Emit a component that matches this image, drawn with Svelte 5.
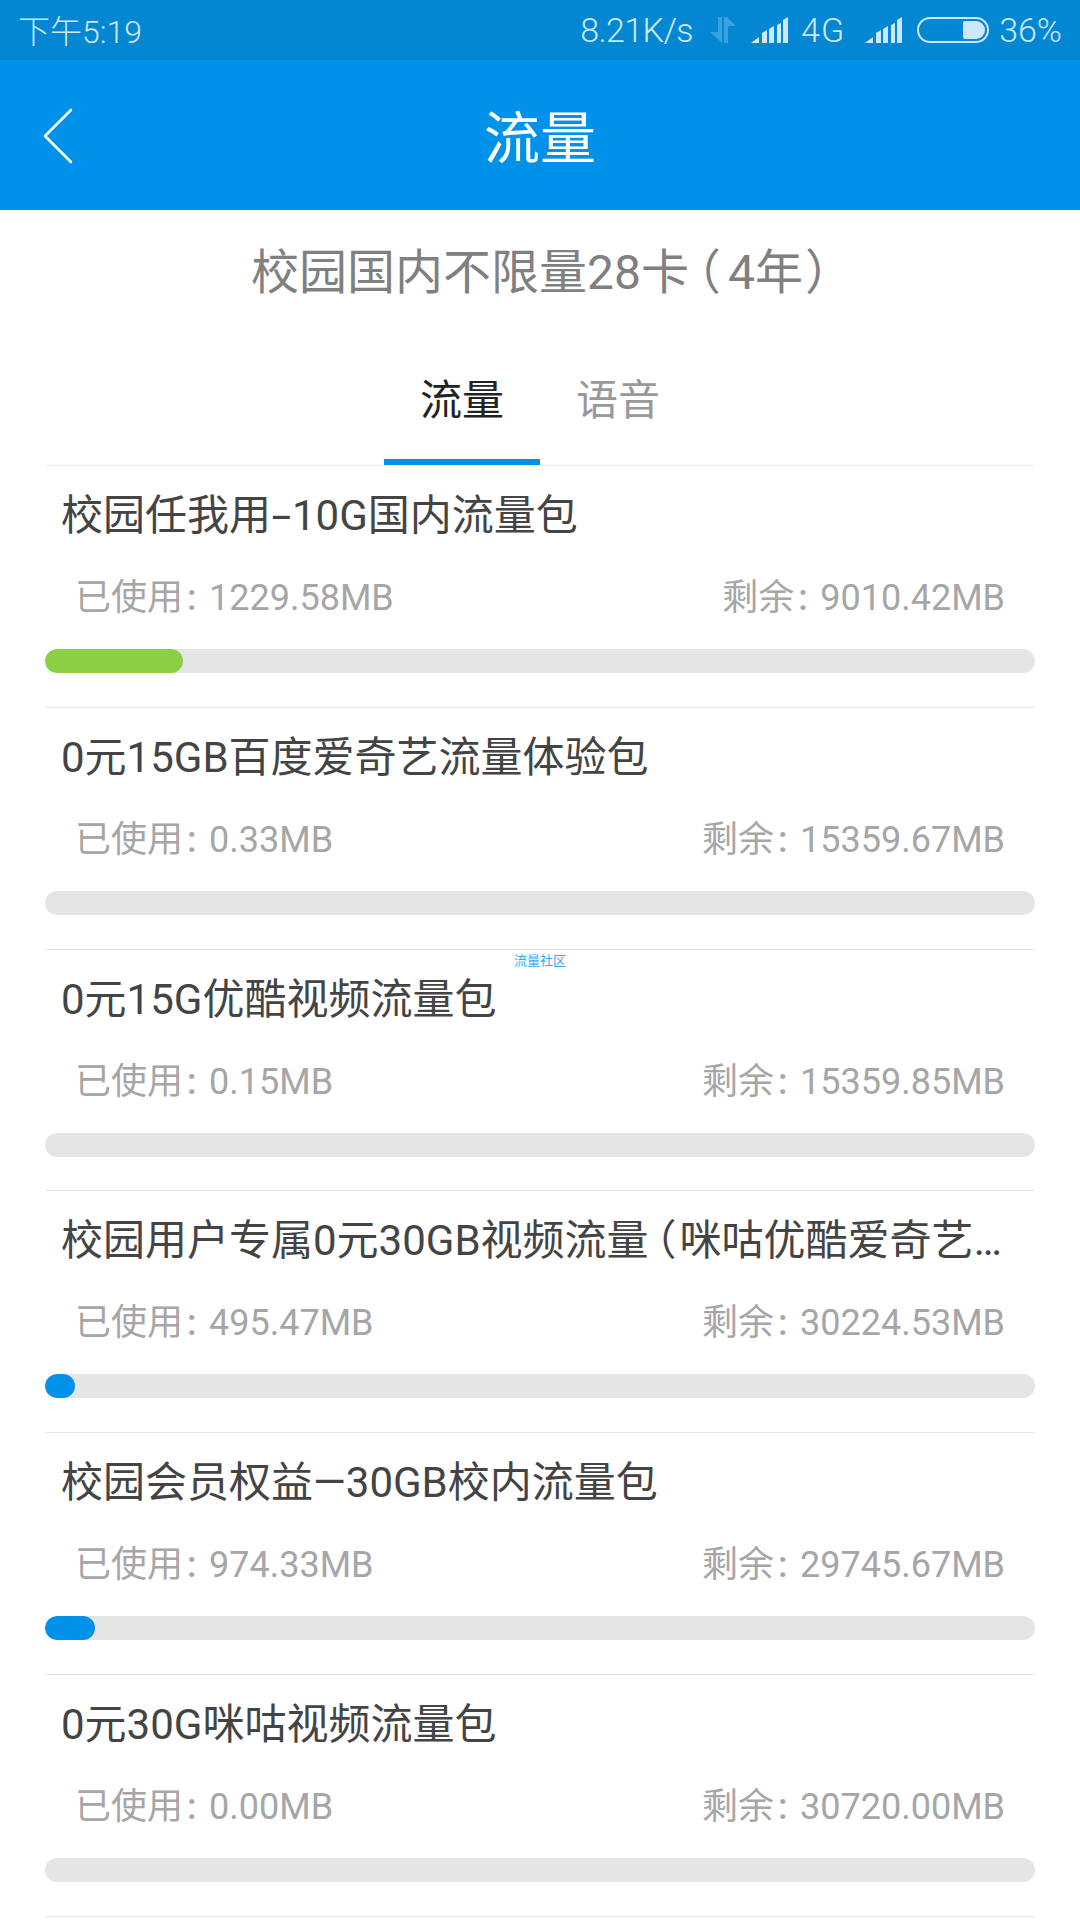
<script lang="ts">
  const packs = [
    { name: "校园任我用-10G国内流量包", used: "1229.58MB", left: "9010.42MB", pct: 13.9, color: "#8bcf45" },
    { name: "0元15GB百度爱奇艺流量体验包", used: "0.33MB", left: "15359.67MB", pct: 0, color: "#0091ea" },
    { name: "0元15G优酷视频流量包", used: "0.15MB", left: "15359.85MB", pct: 0, color: "#0091ea" },
    { name: "校园用户专属0元30GB视频流量（咪咕优酷爱奇艺腾讯）", used: "495.47MB", left: "30224.53MB", pct: 3, color: "#0091ea" },
    { name: "校园会员权益—30GB校内流量包", used: "974.33MB", left: "29745.67MB", pct: 5, color: "#0091ea" },
    { name: "0元30G咪咕视频流量包", used: "0.00MB", left: "30720.00MB", pct: 0, color: "#0091ea" },
  ];

  // the brackets and the hyphen are set tighter/wider than the font's own
  const pieces = (name: string) => name.split(/(（|）|-)/).filter(Boolean);
</script>

<div class="page">
  <div class="status">
    <span class="time">下午5:19</span>
    <div class="status-right">
      <span class="speed">8.21K/s</span>
      <svg class="updown" width="26" height="26" viewBox="0 0 26 26">
        <path d="M8 0h4v26L0 15h8z" fill="#fff" opacity="0.22" />
        <path d="M14 0h3l9 9h-8v17h-4z" fill="#fff" opacity="0.22" />
      </svg>
      <svg class="signal" width="37" height="26" viewBox="0 0 37 26">
        <path d="M0 26l8-6v6zM11 26V16l5-3v13zM18 26V12l5-3v17zM26 26V8l4-2v20zM32 26V3l5-3v26z" fill="#cde8f8" />
      </svg>
      <span class="net">4G</span>
      <svg class="signal gap" width="37" height="26" viewBox="0 0 37 26">
        <path d="M0 26l8-6v6zM11 26V16l5-3v13zM18 26V12l5-3v17zM26 26V8l4-2v20zM32 26V3l5-3v26z" fill="#cde8f8" />
      </svg>
      <div class="battery"><div class="level"></div></div>
      <span>36%</span>
    </div>
  </div>

  <header class="bar">
    <svg class="back" width="30" height="56" viewBox="0 0 30 56">
      <path d="M28 2L2 28l26 26" fill="none" stroke="#fff" stroke-width="2.6" stroke-linecap="round" stroke-linejoin="round" />
    </svg>
    <h1>流量</h1>
  </header>

  <h2 class="plan">校园国内不限量28卡<span class="open">（</span>4年<span class="close">）</span></h2>

  <div class="tabs">
    <div class="tab active">流量</div>
    <div class="tab">语音</div>
  </div>

  <div class="list">
    {#each packs as pack, i}
      <div class="row">
        {#if i === 2}<span class="mark">流量社区</span>{/if}
        <div class="name">
          {#each pieces(pack.name) as piece}
            {#if piece === "（"}<span class="open">{piece}</span>{:else if piece === "）"}<span class="close">{piece}</span>{:else if piece === "-"}<span class="dash">{piece}</span>{:else}{piece}{/if}
          {/each}
        </div>
        <div class="meta">
          <span>已使用<span class="colon">:</span>{pack.used}</span>
          <span>剩余<span class="colon">:</span>{pack.left}</span>
        </div>
        <div class="track">
          {#if pack.pct > 0}
            <div class="fill" style={`width:${pack.pct}%;background:${pack.color}`}></div>
          {/if}
        </div>
      </div>
    {/each}
  </div>
</div>

<style>
  :global(body) { margin: 0; background: #fff; }
  .page { width: 1080px; height: 1920px; overflow: hidden; background: #fff; font-family: Roboto, "Noto Sans CJK SC", sans-serif; }
  .status { height: 60px; display: flex; align-items: center; justify-content: space-between; padding: 0 18px; background: #0387d3; color: #cde8f8; font-size: 34px; font-weight: 300; box-sizing: border-box; }
  .time { font-size: 32px; margin-top: -3px; }
  .speed { letter-spacing: -0.6px; }
  .net { letter-spacing: 1px; }
  .status-right { display: flex; align-items: center; }
  .updown { margin: 0 15px 0 17px; }
  .signal { margin-right: 13px; }
  .signal.gap { margin: 0 15px 0 20px; }
  .battery { width: 72px; height: 26px; box-sizing: border-box; margin-right: 10px; padding: 2px; display: flex; justify-content: flex-end; border: 2px solid #cde8f8; border-radius: 13px; }
  .level { width: 22px; background: #cde8f8; border-radius: 2px 9px 9px 2px; }
  .bar { height: 150px; display: flex; align-items: center; justify-content: center; position: relative; background: #0091ea; }
  .bar h1 { margin: 0 0 4px; color: #fff; font-size: 56px; font-weight: 400; }
  .back { position: absolute; left: 43px; top: 48px; }
  .plan { margin: 0; height: 106px; line-height: 126px; text-align: center; color: #808080; font-size: 48px; font-weight: 400; }
  .open, .close { font-feature-settings: "halt"; }
  .plan .open { padding: 0 7px 0 8px; }
  .plan .close { padding-left: 2px; }
  .tabs { height: 149px; display: flex; justify-content: center; align-items: flex-end; box-sizing: border-box; }
  .tab { width: 156px; height: 103px; box-sizing: border-box; text-align: center; font-size: 42px; line-height: 78px; color: #999; }
  .tab.active { color: #222; border-bottom: 6px solid #0091ea; }
  .list { margin: 0 45px; border-top: 1px solid #eee; }
  .row { position: relative; height: 241.8px; box-sizing: border-box; border-bottom: 1px solid #e6e6e6; }
  .mark { position: absolute; left: 469px; top: 0; font-size: 13px; color: #3ea6f0; }
  .name { padding: 22px 16px 0; line-height: 56px; font-size: 42px; color: #444; white-space: nowrap; overflow: hidden; text-overflow: ellipsis; }
  .name .open { padding: 0 3px 0 7px; }
  .dash { display: inline-block; width: 21px; text-align: center; transform: scaleX(1.7); }
  .meta { display: flex; justify-content: space-between; padding: 0 30px; line-height: 50px; margin-top: 29px; font-size: 36px; color: #a6a6a6; }
  .colon { display: inline-block; width: 22px; padding-left: 4px; font-weight: 500; }
  .track { height: 24px; margin-top: 26px; border-radius: 12px; background: #e5e5e5; overflow: hidden; }
  .fill { height: 100%; border-radius: 12px; }
</style>
